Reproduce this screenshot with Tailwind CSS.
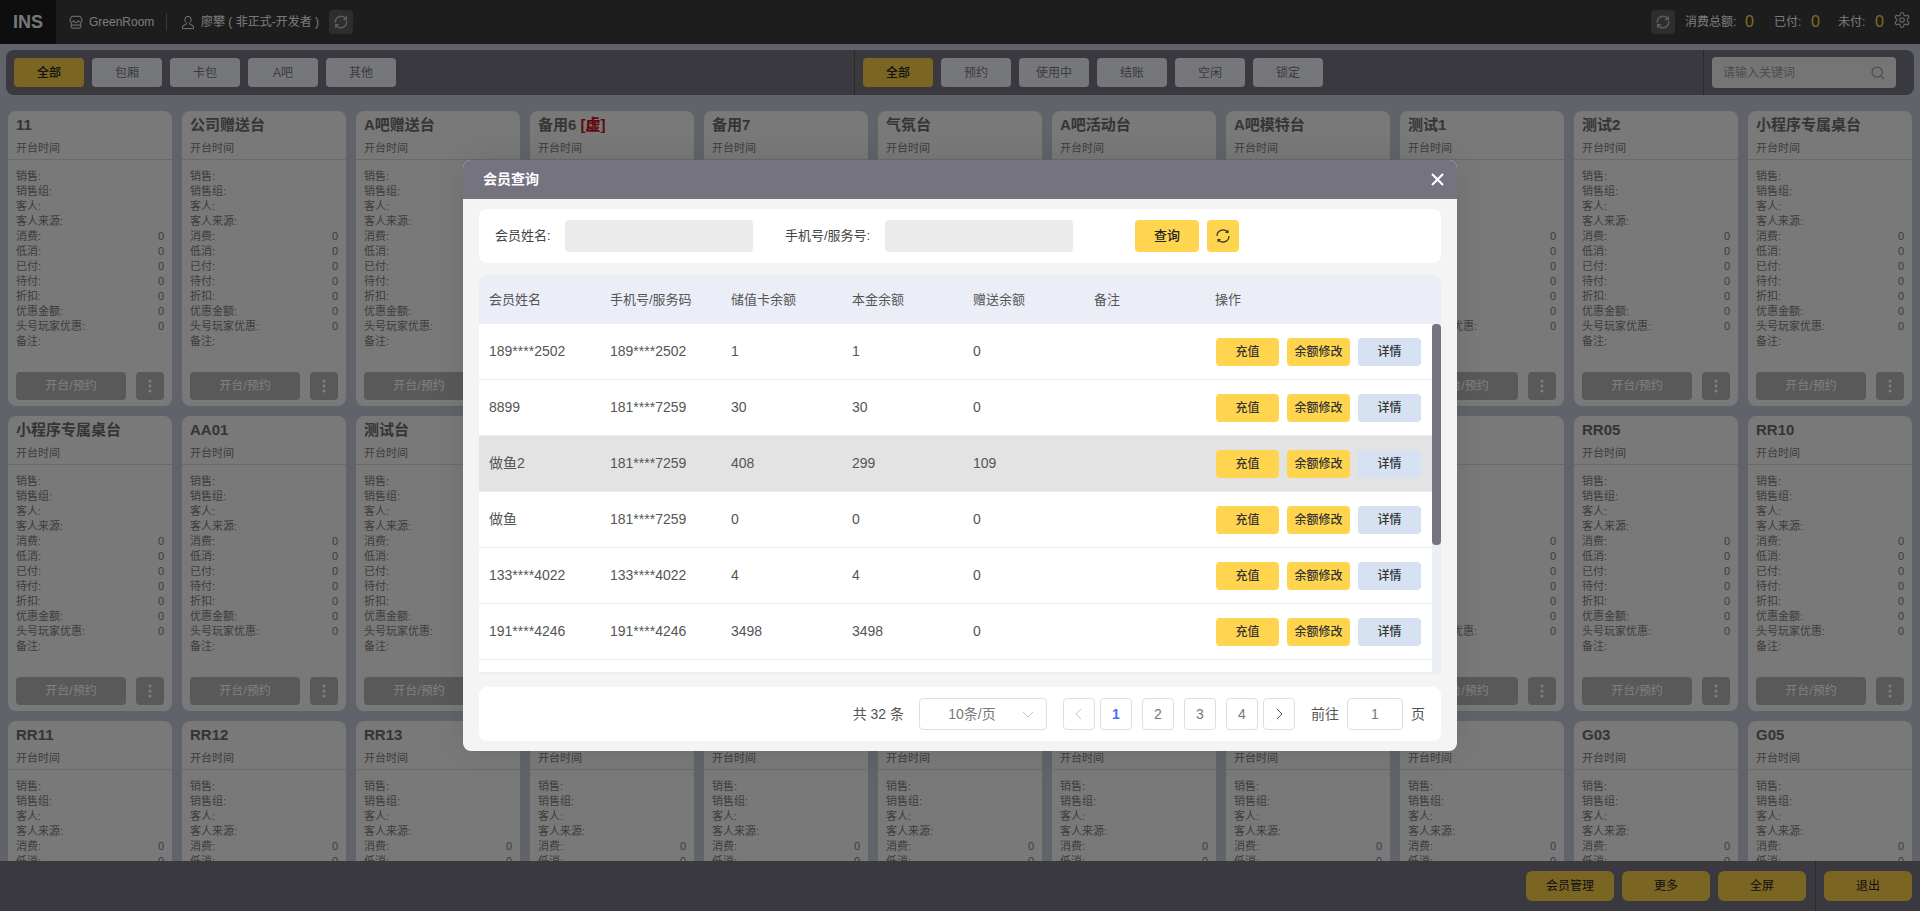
<!DOCTYPE html>
<html lang="zh-CN">
<head>
  <meta charset="UTF-8" />
  <title>INS - GreenRoom</title>
  <script src="https://cdn.jsdelivr.net/npm/@tailwindcss/browser@4"></script>
</head>
<body class="overflow-hidden">
<div class="relative h-[911px] w-[1920px] flex flex-col overflow-hidden bg-[#c2c6d6] text-[#7a7a7a] [font-family:'Liberation_Sans','Noto_Sans_CJK_SC',sans-serif]">

  <!-- Top bar -->
  <header class="h-[44px] shrink-0 flex items-center bg-[#3a3a3a] text-[12px] text-[#f4f4f4]">
    <div class="w-[56px] h-full flex items-center justify-center bg-[#1c1c1c] text-[18px] font-bold text-[#eee]">INS</div>
    <svg class="ml-[13px] w-[14px] h-[14px]" viewBox="0 0 16 16" fill="none" stroke="currentColor" stroke-width="1.1"><path d="M3 1.500h10l2 4a2.200 2.200 0 0 1-4.400.6 2.600 2.600 0 0 1-5.200 0A2.200 2.200 0 0 1 1 5.500z"/><path d="M2.500 8.500v5a1.500 1.500 0 0 0 1.500 1.500h8a1.500 1.500 0 0 0 1.500-1.500v-5M3 11.500h10"/></svg>
    <span class="ml-[6px] w-[66px]">GreenRoom</span>
    <span class="ml-[11px] w-px h-[18px] bg-[#777]"></span>
    <svg class="ml-[14px] w-[14px] h-[15px]" viewBox="0 0 16 16" fill="none" stroke="currentColor" stroke-width="1.1"><path d="M8 1a3.600 3.600 0 0 0-3.600 3.800c0 1.600.8 3 1.800 3.700v1.300L1.800 12v3h12.400v-3l-4.400-2.200V8.500c1-.7 1.800-2.100 1.800-3.700A3.600 3.600 0 0 0 8 1z"/></svg>
    <span class="ml-[6px] w-[122px] whitespace-nowrap">廖攀 ( 非正式-开发者 )</span>
    <button class="ml-[6px] w-[24px] h-[24px] rounded flex items-center justify-center bg-[#5c5c5c] text-[#bbb]">
      <svg class="w-[18px] h-[18px]" viewBox="0 0 24 24" fill="none" stroke="currentColor" stroke-width="2"><path d="M4.500 13a7.800 7.800 0 0 1 12.800-6.800"/><path d="M19.500 11a7.800 7.800 0 0 1-12.800 6.800"/><path d="M20 3.500v6h-6z" fill="currentColor" stroke="none"/><path d="M4 20.500v-6h6z" fill="currentColor" stroke="none"/></svg>
    </button>
    <div class="ml-auto flex items-center">
      <button class="w-[24px] h-[24px] rounded flex items-center justify-center bg-[#5c5c5c] text-[#bbb]">
        <svg class="w-[18px] h-[18px]" viewBox="0 0 24 24" fill="none" stroke="currentColor" stroke-width="2"><path d="M4.500 13a7.800 7.800 0 0 1 12.800-6.800"/><path d="M19.500 11a7.800 7.800 0 0 1-12.800 6.800"/><path d="M20 3.500v6h-6z" fill="currentColor" stroke="none"/><path d="M4 20.500v-6h6z" fill="currentColor" stroke="none"/></svg>
      </button>
      <span class="ml-[10px] w-[54px] whitespace-nowrap">消费总额:</span><span class="ml-[6px] w-[9px] text-[16px] text-[#ffd54f]">0</span>
      <span class="ml-[20px] w-[30px] whitespace-nowrap">已付:</span><span class="ml-[7px] w-[9px] text-[16px] text-[#ffd54f]">0</span>
      <span class="ml-[18px] w-[30px] whitespace-nowrap">未付:</span><span class="ml-[7px] w-[9px] text-[16px] text-[#ffd54f]">0</span>
      <svg class="ml-[9px] mr-[9px] w-[18px] h-[18px] -mt-[4px]" viewBox="0 0 24 24" fill="none" stroke="#ccc" stroke-width="1.600"><path d="M12.220 2h-.44a2 2 0 0 0-2 2v.18a2 2 0 0 1-1 1.730l-.43.25a2 2 0 0 1-2 0l-.15-.08a2 2 0 0 0-2.730.73l-.22.38a2 2 0 0 0 .73 2.730l.15.1a2 2 0 0 1 1 1.720v.51a2 2 0 0 1-1 1.740l-.15.09a2 2 0 0 0-.73 2.730l.22.38a2 2 0 0 0 2.730.73l.15-.08a2 2 0 0 1 2 0l.43.25a2 2 0 0 1 1 1.730V20a2 2 0 0 0 2 2h.44a2 2 0 0 0 2-2v-.18a2 2 0 0 1 1-1.730l.43-.25a2 2 0 0 1 2 0l.15.08a2 2 0 0 0 2.730-.73l.22-.39a2 2 0 0 0-.73-2.730l-.15-.08a2 2 0 0 1-1-1.740v-.5a2 2 0 0 1 1-1.740l.15-.09a2 2 0 0 0 .73-2.730l-.22-.38a2 2 0 0 0-2.730-.73l-.15.08a2 2 0 0 1-2 0l-.43-.25a2 2 0 0 1-1-1.730V4a2 2 0 0 0-2-2z"/><circle cx="12" cy="12" r="3"/></svg>
    </div>
  </header>

  <!-- Filters -->
  <div class="shrink-0 mx-[6px] mt-[6px] h-[45px] flex rounded-lg bg-[#74737f] text-[12px]">
    <div class="w-[849px] pl-[8px] flex items-center gap-[8px] border-r border-[#555]">
      <button class="w-[70px] h-[29px] rounded bg-[#f6ca47] font-medium text-[#222]">全部</button>
      <button class="w-[70px] h-[29px] rounded bg-[#ebeef7] text-[#777]">包厢</button>
      <button class="w-[70px] h-[29px] rounded bg-[#ebeef7] text-[#777]">卡包</button>
      <button class="w-[70px] h-[29px] rounded bg-[#ebeef7] text-[#777]">A吧</button>
      <button class="w-[70px] h-[29px] rounded bg-[#ebeef7] text-[#777]">其他</button>
    </div>
    <div class="flex-1 pl-[8px] flex items-center gap-[8px] border-r border-[#555]">
      <button class="w-[70px] h-[29px] rounded bg-[#f6ca47] font-medium text-[#222]">全部</button>
      <button class="w-[70px] h-[29px] rounded bg-[#ebeef7] text-[#777]">预约</button>
      <button class="w-[70px] h-[29px] rounded bg-[#ebeef7] text-[#777]">使用中</button>
      <button class="w-[70px] h-[29px] rounded bg-[#ebeef7] text-[#777]">结账</button>
      <button class="w-[70px] h-[29px] rounded bg-[#ebeef7] text-[#777]">空闲</button>
      <button class="w-[70px] h-[29px] rounded bg-[#ebeef7] text-[#777]">锁定</button>
    </div>
    <div class="w-[210px] pl-[8px] flex items-center">
      <div class="w-[184px] h-[31px] px-[11px] rounded bg-[#ebebeb] flex items-center justify-between text-[#999]">
        <span>请输入关键词</span>
        <svg class="w-[14px] h-[14px]" viewBox="0 0 16 16" fill="none" stroke="currentColor" stroke-width="1.400"><circle cx="7" cy="7" r="5.800"/><path d="M11.500 11.500L15 15"/></svg>
      </div>
    </div>
  </div>

  <!-- Table cards -->
  <main class="flex-1 min-h-0 overflow-hidden pt-[16px] px-[8px]">
    <div id="cards" class="grid grid-cols-[repeat(11,164px)] gap-[10px]"></div>
  </main>

  <!-- Bottom bar -->
  <footer class="h-[50px] shrink-0 flex items-center justify-end pr-[8px] bg-[#74737f] text-[12px] text-[#222]">
    <button class="w-[88px] h-[30px] rounded-md bg-[#f6ca47]">会员管理</button>
    <button class="ml-[8px] w-[88px] h-[30px] rounded-md bg-[#f6ca47]">更多</button>
    <button class="ml-[8px] w-[88px] h-[30px] rounded-md bg-[#f6ca47]">全屏</button>
    <span class="ml-[9px] w-px h-full bg-[#555]"></span>
    <button class="ml-[8px] w-[88px] h-[30px] rounded-md bg-[#f6ca47]">退出</button>
  </footer>

  <!-- Member dialog -->
  <div class="absolute inset-0 z-10 flex items-center justify-center bg-black/50">
    <div class="w-[994px] h-[591px] rounded-lg overflow-hidden bg-[#f4f4f4] shadow-[0_0_30px_rgba(0,0,0,0.1)]">
      <div class="h-[39px] pl-[20px] pr-[13px] flex items-center justify-between bg-[#74737f] text-white">
        <span class="text-[14px] font-bold">会员查询</span>
        <svg class="w-[13px] h-[13px]" viewBox="0 0 13 13" stroke="currentColor" stroke-width="2.200"><path d="M1 1l11 11M12 1L1 12"/></svg>
      </div>

      <div class="mx-[16px] mt-[10px] h-[54px] pl-[16px] flex items-center rounded-lg bg-white text-[13px] text-[#444]">
        <label class="w-[70px]">会员姓名:</label>
        <div class="w-[188px] h-[32px] rounded bg-[#ebebeb]"></div>
        <label class="ml-[32px] w-[100px]">手机号/服务号:</label>
        <div class="w-[188px] h-[32px] rounded bg-[#ebebeb]"></div>
        <button class="ml-[62px] w-[64px] h-[32px] rounded bg-[#ffd54f] font-medium text-[#222]">查询</button>
        <button class="ml-[8px] w-[32px] h-[32px] rounded bg-[#ffd54f] flex items-center justify-center text-[#333]">
          <svg class="w-[16px] h-[16px]" viewBox="0 0 16 16" fill="none" stroke="currentColor" stroke-width="1.200"><path d="M2 8a6 6 0 0 1 10.500-4"/><path d="M14 8a6 6 0 0 1-10.500 4"/><path d="M13.500 1.500v3.500H10z" fill="currentColor" stroke="none"/><path d="M2.500 14.500V11H6z" fill="currentColor" stroke="none"/></svg>
        </button>
      </div>

      <div class="mx-[16px] mt-[12px] h-[399px] pb-[2px] flex flex-col rounded-t-lg overflow-hidden bg-[#ebeef7] text-[#555]">
        <div class="h-[49px] shrink-0 pl-[10px] grid grid-cols-[121px_121px_121px_121px_121px_121px_1fr] items-center text-[13px]">
          <span>会员姓名</span><span>手机号/服务码</span><span>储值卡余额</span><span>本金余额</span><span>赠送余额</span><span>备注</span><span>操作</span>
        </div>
        <div class="relative flex-1 overflow-hidden">
          <div id="rows" class="w-[953px] h-full bg-white"></div>
          <div class="absolute right-0 top-0 w-[9px] h-[221px] rounded bg-[#74737f]"></div>
        </div>
      </div>

      <div class="mx-[16px] mt-[13px] h-[54px] pr-[16px] flex items-center justify-end rounded-lg bg-white text-[14px] text-[#555]">
        <span>共 32 条</span>
        <div class="ml-[15px] w-[128px] h-[32px] px-[12px] flex items-center rounded border border-[#dcdfe6] text-[#777]">
          <span class="flex-1 text-center pr-[10px]">10条/页</span>
          <svg class="w-[12px] h-[12px]" viewBox="0 0 12 12" fill="none" stroke="#c0c4cc"><path d="M1 4l5 5 5-5"/></svg>
        </div>
        <button class="ml-[16px] w-[32px] h-[32px] flex items-center justify-center rounded border border-[#dcdfe6] text-[#c0c4cc]"><svg class="w-[10px] h-[12px]" viewBox="0 0 10 12" fill="none" stroke="currentColor"><path d="M7 1L2 6l5 5"/></svg></button>
        <button class="ml-[5px] w-[32px] h-[32px] rounded border border-[#dcdfe6] font-bold text-[#4a6cf7]">1</button>
        <button class="ml-[10px] w-[32px] h-[32px] rounded border border-[#dcdfe6] text-[#777]">2</button>
        <button class="ml-[10px] w-[32px] h-[32px] rounded border border-[#dcdfe6] text-[#777]">3</button>
        <button class="ml-[10px] w-[32px] h-[32px] rounded border border-[#dcdfe6] text-[#777]">4</button>
        <button class="ml-[5px] w-[32px] h-[32px] flex items-center justify-center rounded border border-[#dcdfe6] text-[#555]"><svg class="w-[10px] h-[12px]" viewBox="0 0 10 12" fill="none" stroke="currentColor"><path d="M3 1l5 5-5 5"/></svg></button>
        <span class="ml-[16px]">前往</span>
        <div class="ml-[8px] w-[56px] h-[32px] flex items-center justify-center rounded border border-[#dcdfe6] text-[#777]">1</div>
        <span class="ml-[8px]">页</span>
      </div>
    </div>
  </div>
</div>

<script>
  const names = [
    '11', '公司赠送台', 'A吧赠送台', '备用6 <b class="text-[#c0141c]">[虚]</b>', '备用7', '气氛台', 'A吧活动台', 'A吧模特台', '测试1', '测试2', '小程序专属桌台',
    '小程序专属桌台', 'AA01', '测试台', 'AA02', 'AA03', 'RR01', 'RR02', 'RR03', 'RR04', 'RR05', 'RR10',
    'RR11', 'RR12', 'RR13', 'RR14', 'RR15', 'RR16', 'G01', 'G02', 'G02A', 'G03', 'G05'
  ];
  const fields = [['销售'], ['销售组'], ['客人'], ['客人来源'], ['消费', 0], ['低消', 0], ['已付', 0], ['待付', 0], ['折扣', 0], ['优惠金额', 0], ['头号玩家优惠', 0], ['备注']];

  document.getElementById('cards').innerHTML = names.map(name => `
    <div class="h-[295px] flex flex-col rounded-lg bg-[#f2f2f2]">
      <div class="h-[49px] pt-[4px] px-[8px] border-b border-[#d4d4d4]">
        <div class="text-[15px] leading-[20px] font-bold text-[#6a6a6a]">${name}</div>
        <div class="mt-[5px] text-[11px] leading-[16px]">开台时间</div>
      </div>
      <div class="pt-[9px] px-[8px] text-[11px] leading-[15px]">
        ${fields.map(f => `<div class="flex justify-between"><span>${f[0]}:</span><span>${f[1] === undefined ? '' : f[1]}</span></div>`).join('')}
      </div>
      <div class="mt-auto px-[8px] pb-[6px] flex justify-between">
        <button class="w-[110px] h-[28px] rounded bg-[#b2b2b2] text-[12px] text-white">开台/预约</button>
        <button class="w-[28px] h-[28px] rounded bg-[#b2b2b2] flex items-center justify-center"><svg class="w-[4px] h-[14px]" viewBox="0 0 4 14" fill="#fff"><circle cx="2" cy="2" r="1.500"/><circle cx="2" cy="7" r="1.500"/><circle cx="2" cy="12" r="1.500"/></svg></button>
      </div>
    </div>`).join('');

  const members = [
    ['189****2502', '189****2502', 1, 1, 0],
    ['8899', '181****7259', 30, 30, 0],
    ['做鱼2', '181****7259', 408, 299, 109],
    ['做鱼', '181****7259', 0, 0, 0],
    ['133****4022', '133****4022', 4, 4, 0],
    ['191****4246', '191****4246', 3498, 3498, 0],
    ['', '', '', '', '']
  ];
  document.getElementById('rows').innerHTML = members.map((m, i) => `
    <div class="h-[56px] pl-[10px] grid grid-cols-[121px_121px_121px_121px_121px_121px_1fr] items-center border-b border-[#ebeef7] text-[14px] ${i === 2 ? 'bg-[#e3e3e3]' : ''}">
      <span>${m[0]}</span><span>${m[1]}</span><span>${m[2]}</span><span>${m[3]}</span><span>${m[4]}</span><span></span>
      <div class="ml-px flex gap-[8px] text-[12px] font-medium text-[#333]">
        <button class="w-[63px] h-[28px] rounded bg-[#ffd54f]">充值</button>
        <button class="w-[63px] h-[28px] rounded bg-[#ffd54f]">余额修改</button>
        <button class="w-[63px] h-[28px] rounded bg-[#d6e1f1]">详情</button>
      </div>
    </div>`).join('');
</script>
</body>
</html>
